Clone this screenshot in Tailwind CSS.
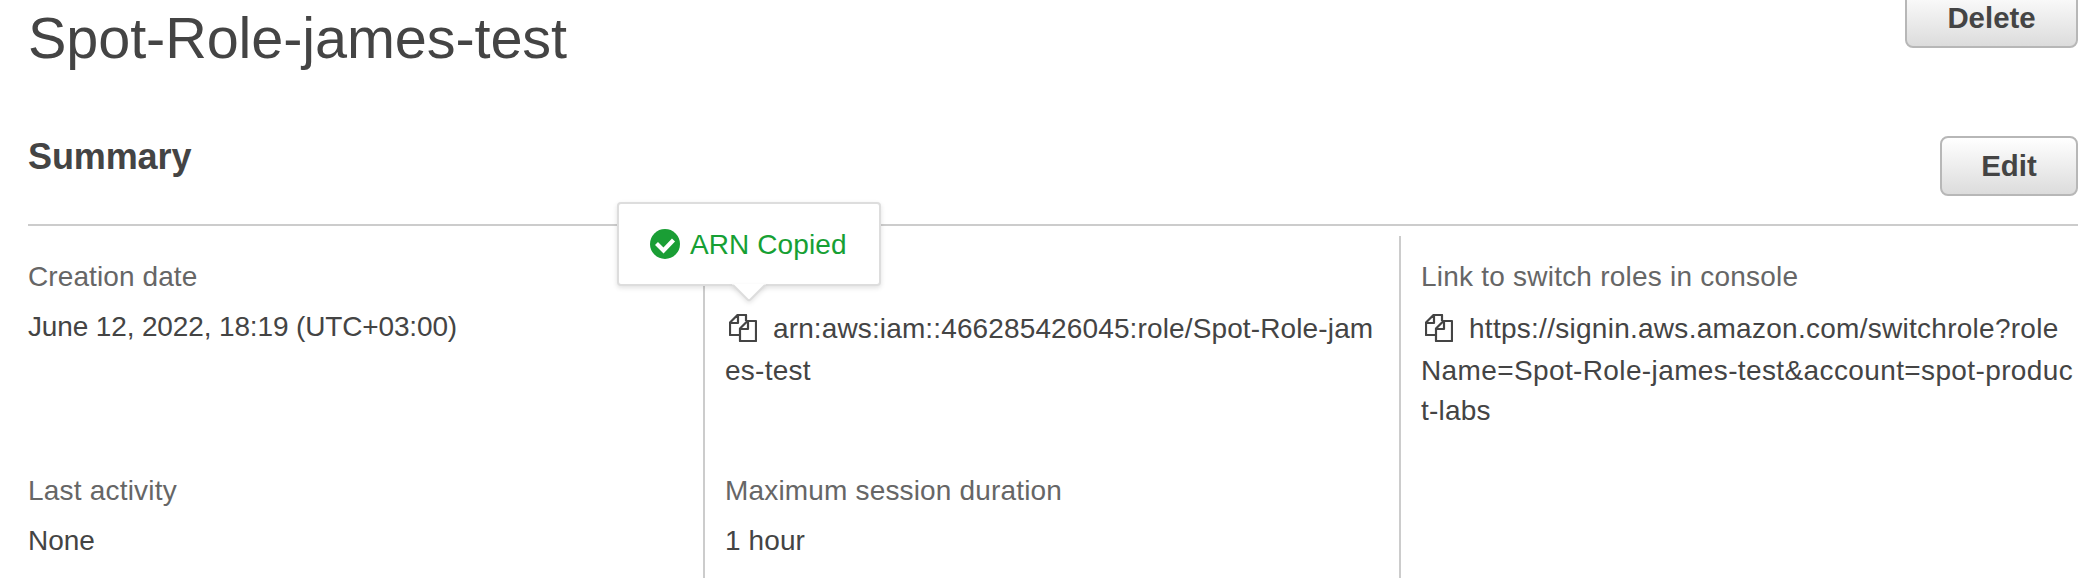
<!DOCTYPE html>
<html lang="en">
<head>
<meta charset="utf-8">
<title>Spot-Role-james-test</title>
<script src="https://cdn.jsdelivr.net/npm/@tailwindcss/browser@4"></script>
</head>
<body class="h-[578px] overflow-hidden bg-white pl-[28px] pr-4 font-['Liberation_Sans',Arial,sans-serif] text-[28px] leading-[40px] text-[#444]">
<header class="flex h-[48px] items-end justify-between">
  <h1 class="-mb-[30px] text-[57.6px] leading-[80px] tracking-[-0.1px] whitespace-nowrap">Spot-Role-james-test</h1>
  <button class="h-[60px] w-[173px] shrink-0 rounded-lg border-2 border-[#b7b7b7] bg-linear-to-b from-white to-[#dcdcdc] text-[29.4px] leading-[56px] font-bold">Delete</button>
</header>
<section class="relative">
  <div class="mt-[88px] flex h-[90px] items-start justify-between border-b-2 border-[#ccc]">
    <h2 class="text-[36px] leading-[42px] font-bold tracking-[-0.1px]">Summary</h2>
    <button class="h-[60px] w-[138px] rounded-lg border-2 border-[#b7b7b7] bg-linear-to-b from-white to-[#dcdcdc] text-[29.4px] leading-[56px] font-bold">Edit</button>
  </div>
  <div class="mt-[10px] grid h-[342px] grid-cols-[675px_696px_1fr]">
    <dl class="flex flex-col pt-[21px]">
      <dt class="tracking-[0.1px] text-[#666]">Creation date</dt>
      <dd class="mt-[10px] h-[164px] tracking-[-0.14px]">June 12, 2022, 18:19 (UTC+03:00)</dd>
      <dt class="tracking-[0.2px] text-[#666]">Last activity</dt>
      <dd class="mt-[10px]">None</dd>
    </dl>
    <dl class="flex flex-col border-l-2 border-[#ccc] pt-[21px] pl-5">
      <dt class="h-10"></dt>
      <dd class="mt-[12px] h-[162px] whitespace-nowrap">
        <div class="flex h-[42px] tracking-[0.13px]"><svg class="mt-[5px] mr-4 ml-1 size-7" viewBox="0 0 28 28" fill="none" stroke="#444" stroke-width="2.200" stroke-linejoin="round"><path d="M10 21H1V8.500L8.500 1H17v6M9 1v8H1M11 14.500L18.500 7H27v20H11zM19 7v8h-8"/></svg>arn:aws:iam::466285426045:role/Spot-Role-jam</div>
        <div class="tracking-[0.25px]">es-test</div>
      </dd>
      <dt class="tracking-[0.17px] text-[#666]">Maximum session duration</dt>
      <dd class="mt-[10px] tracking-[0.1px]">1 hour</dd>
    </dl>
    <dl class="flex flex-col border-l-2 border-[#ccc] pt-[21px] pl-5">
      <dt class="tracking-[0.22px] text-[#666]">Link to switch roles in console</dt>
      <dd class="mt-[12px] whitespace-nowrap">
        <div class="flex h-[42px] tracking-[0.27px]"><svg class="mt-[5px] mr-4 ml-1 size-7" viewBox="0 0 28 28" fill="none" stroke="#444" stroke-width="2.200" stroke-linejoin="round"><path d="M10 21H1V8.500L8.500 1H17v6M9 1v8H1M11 14.500L18.500 7H27v20H11zM19 7v8h-8"/></svg>https://signin.aws.amazon.com/switchrole?role</div>
        <div class="tracking-[0.38px]">Name=Spot-Role-james-test&amp;account=spot-produc</div>
        <div class="tracking-[0.2px]">t-labs</div>
      </dd>
    </dl>
  </div>
  <div class="absolute top-[66px] left-[589px] flex h-[84px] w-[264px] items-center rounded-[4px] border-2 border-[#ddd] bg-white pl-[31px] text-[#16a034] shadow-[0_2px_5px_rgba(0,0,0,0.12)]">
    <svg class="mr-[10px] size-[30px]" viewBox="0 0 30 30"><circle cx="15" cy="15" r="15" fill="#1a9e35"/><path d="M6.500 14.500l7 7 10-10.500" fill="none" stroke="#fff" stroke-width="4.200"/></svg>
    <span class="mt-[2px] tracking-[0.1px]">ARN Copied</span>
    <svg class="absolute top-[80px] left-[113px] h-[20px] w-[34px] drop-shadow-[0_2px_2px_rgba(0,0,0,0.1)]" viewBox="0 0 34 20"><path d="M0 0L15.500 15.500Q17 17 18.500 15.500L34 0z" fill="#fff"/><path d="M1 1L15.500 15.500Q17 17 18.500 15.500L33 1" fill="none" stroke="#ddd" stroke-width="2"/></svg>
  </div>
</section>
</body>
</html>
